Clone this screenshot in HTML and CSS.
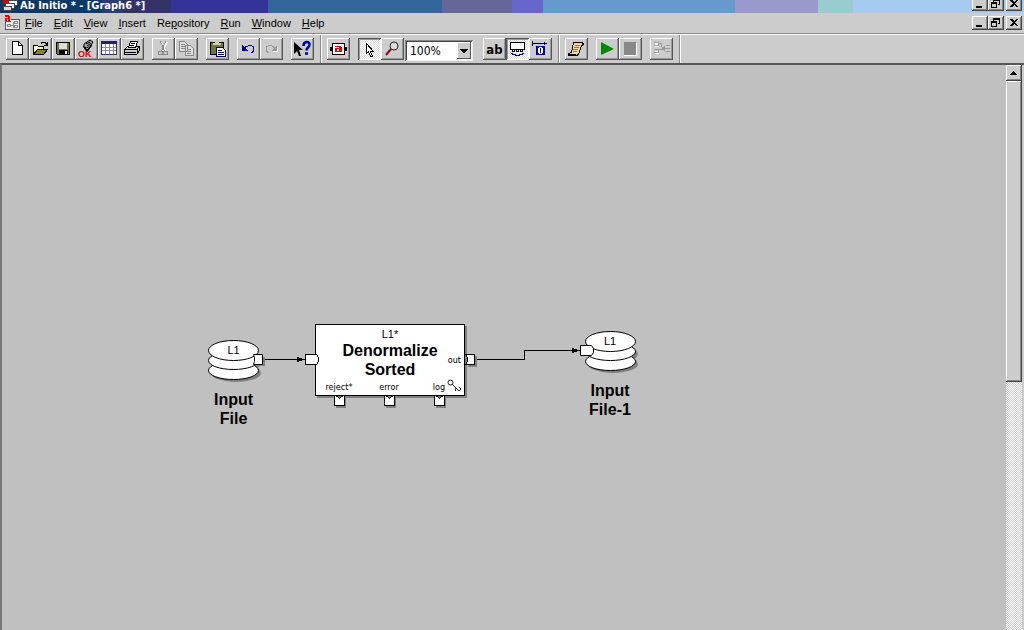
FILE: index.html
```html
<!DOCTYPE html>
<html lang="en">
<head>
    <meta charset="UTF-8">
    <meta name="viewport" content="width=device-width, initial-scale=1.0">
    <title>Ab Initio * - [Graph6 *]</title>
    <link rel="stylesheet" href="styles.css">
</head>
<body>
    <header class="title-bar">
        <svg class="app-icon" width="16" height="16" viewBox="0 0 16 16">
            <path d="M6.500 4.500h9v5h-9z" fill="#fff" stroke="#444"/>
            <path d="M3.500 7.500h9v5h-9z" fill="#fff" stroke="#444"/>
            <path d="M1.500 10.500h8v4h-8z" fill="#ddd" stroke="#444"/>
            <path d="M1 4h5v4H1z" fill="#d00"/>
        </svg>
        <h1>Ab Initio * - [Graph6 *]</h1>
        <div class="window-buttons">
            <button aria-label="Minimize"><svg width="16" height="14"><path d="M4 9h6v2H4z"/></svg></button>
            <button aria-label="Restore"><svg width="16" height="14"><path d="M5 2h7v6h-2v-1h1V4H6v1H5zM3 5h6v6H3zM4 7v3h4V7z" fill-rule="evenodd"/></svg></button>
            <button class="close" aria-label="Close"><svg width="16" height="14"><path d="M4 3h2l2 2 2-2h2L9 6.500 12 10h-2L8 8l-2 2H4l3-3.500z"/></svg></button>
        </div>
    </header>

    <nav class="menu-bar">
        <svg class="doc-icon" width="16" height="16" viewBox="0 0 16 16">
            <path d="M2 5h13v9H2z" fill="#eee"/>
            <path d="M1.500 6v8.500h14V4.500H7" fill="none" stroke="#555"/>
            <path d="M3.500 9.500h3v2h-3zM10.500 6.500h3v2h-3zM10.500 10.500h3v2h-3zM7 10.500h2v-3h1M9 10v2h1" fill="none" stroke="#888"/>
            <path d="M1 0h4v1h1v5h1v1H2V6H1V3h3V2H1zM3 4v2h1V4z" fill="#e00" fill-rule="evenodd"/>
        </svg>
        <button><u>F</u>ile</button>
        <button><u>E</u>dit</button>
        <button><u>V</u>iew</button>
        <button><u>I</u>nsert</button>
        <button>Re<u>p</u>ository</button>
        <button><u>R</u>un</button>
        <button><u>W</u>indow</button>
        <button><u>H</u>elp</button>
        <div class="window-buttons">
            <button aria-label="Minimize graph"><svg width="16" height="14"><path d="M4 9h6v2H4z"/></svg></button>
            <button aria-label="Restore graph"><svg width="16" height="14"><path d="M5 2h7v6h-2v-1h1V4H6v1H5zM3 5h6v6H3zM4 7v3h4V7z" fill-rule="evenodd"/></svg></button>
            <button class="close" aria-label="Close graph"><svg width="16" height="14"><path d="M4 3h2l2 2 2-2h2L9 6.500 12 10h-2L8 8l-2 2H4l3-3.500z"/></svg></button>
        </div>
    </nav>

    <div class="toolbars">
        <div class="toolbar">
            <div class="group">
                <button class="tool" aria-label="New"><svg width="23" height="22"><path d="M6.500 3.500h6l4 4v9h-10z" fill="#fff" stroke="#000"/><path d="M12.500 3.500v4h4" fill="none" stroke="#000"/></svg></button>
                <button class="tool" aria-label="Open"><svg width="23" height="22"><path d="M4.500 16V7.500h4l1 1h5v3" fill="#ffffb0" stroke="#000"/><path d="M4.500 16.500l4-5h10l-4 5z" fill="#88881a" stroke="#000"/><path d="M12 5.500l1-1h3l2 2M18.500 4v3.500H15" fill="none" stroke="#000"/></svg></button>
                <button class="tool" aria-label="Save"><svg width="23" height="22"><path d="M4.500 4.500h13v12h-12l-1-1z" fill="#77771a" stroke="#000"/><path d="M7 5h8v6H7z" fill="#ddd"/><path d="M7 12h9v4H7z" fill="#000"/><path d="M13 13h2v3h-2z" fill="#eee"/></svg></button>
                <button class="tool check" aria-label="Check"><svg class="smooth" width="23" height="22"><path d="M9 6l6-4 3 2-2 3-4 3-3-1z" fill="#aaa" stroke="#000"/><path d="M8 8l4 4 5-5-5 7z" fill="#000" stroke="#000"/><path d="M11 6l4-2M12 8l4-3" stroke="#000"/></svg><span>OK</span></button>
                <button class="tool" aria-label="Table"><svg width="23" height="22"><path d="M3.500 3.500h15v13h-15z" fill="#fff" stroke="#336"/><path d="M3 3h16v3H3z" fill="#226"/><path d="M4 9.500h14M4 12.500h14M7.500 6v10M11.500 6v10M15.500 6v10" stroke="#88a"/></svg></button>
                <button class="tool" aria-label="Print"><svg width="23" height="22"><path d="M3.500 11.500l3-3h12v4l-3 4h-12z" fill="#ccc" stroke="#000"/><path d="M7.500 9.500l2-6h7l-2 6z" fill="#fff" stroke="#000"/><path d="M10 5.500h4M9 7.500h4" stroke="#000"/><path d="M4 11.500h12l2-3M16 12v4M4 14.500h11" fill="none" stroke="#000"/><path d="M10 13h3v1h-3z" fill="#dd0"/></svg></button>
            </div>
            <div class="group">
                <button class="tool" aria-label="Cut" disabled><svg width="23" height="22"><path d="M9 4l5 10M15 4l-5 10" stroke="#fff" stroke-width="2"/><path d="M8.500 3.500l4 10M13.500 3.500l-4 10" stroke="#888"/><circle cx="8.500" cy="15" r="2" fill="none" stroke="#888"/><circle cx="13.500" cy="15" r="2" fill="none" stroke="#888"/></svg></button>
                <button class="tool" aria-label="Copy" disabled><svg width="23" height="22"><path d="M4.500 3.500h5l3 3v7h-8zM10.500 7.500h5l3 3v7h-8z" fill="#ddd" stroke="#888"/><path d="M6 6.500h4M6 8.500h4M6 10.500h4M12 11.500h4M12 13.500h4M12 15.500h4" stroke="#888"/></svg></button>
            </div>
            <div class="group">
                <button class="tool" aria-label="Paste"><svg width="23" height="22"><path d="M4.500 4.500h13v12h-13z" fill="#77772a" stroke="#000"/><path d="M7 5h8v2H7z" fill="#ccc"/><path d="M9 3h4v2H9z" fill="#dd5"/><path d="M10.500 9.500h6l3 3v6h-9z" fill="#fff" stroke="#006"/><path d="M12 12.500h4M12 14.500h6M12 16.500h6" stroke="#006"/></svg></button>
            </div>
            <div class="group">
                <button class="tool" aria-label="Undo"><svg width="23" height="22"><path d="M5 7v6h6z" fill="#009"/><path d="M7 11c2-4 10-5 10 0 0 2-1 3-3 4" fill="none" stroke="#009"/></svg></button>
                <button class="tool" aria-label="Redo" disabled><svg width="23" height="22"><path d="M18 8v6h-6z" fill="#fff"/><path d="M17 7v6h-6z" fill="#999"/><path d="M15 11C13 6 6 7 6 11c0 2 1 3 3 4" fill="none" stroke="#999"/></svg></button>
            </div>
            <div class="group">
                <button class="tool" aria-label="Context help"><svg class="smooth" width="23" height="22"><path d="M3 4v12l3-3 2 5h2l-2-6h4z" fill="#000"/><path d="M12.500 8c0-5 6-5 6-1.500 0 3-3 3-3 6M14 15.500h3" fill="none" stroke="#009" stroke-width="2.500"/></svg></button>
            </div>
        </div>
        <div class="toolbar">
            <div class="group">
                <button class="tool" aria-label="Component"><svg width="23" height="22"><path d="M5.500 5.500h12v11h-12z" fill="#fff" stroke="#000"/><path d="M3 9h3v4H3zM17 9h3v4h-3z" fill="#000"/><path d="M8 8h6v1h1v5H8v-4h4V9H8zM10 11v2h2v-2z" fill="#e00" fill-rule="evenodd"/></svg></button>
            </div>
            <div class="group">
                <button class="tool pressed" aria-label="Select"><svg width="23" height="22"><path d="M8.500 5.500v10l2-2 2 5h2l-2-5h3z" fill="#fff" stroke="#000"/></svg></button>
                <button class="tool" aria-label="Magnifier"><svg class="smooth" width="23" height="22"><circle cx="13" cy="8" r="4" fill="#ddd" stroke="#222"/><path d="M10 11l-5 6" stroke="#811" stroke-width="2"/></svg></button>
                <div class="zoom">
                    <select aria-label="Zoom"><option>100%</option></select>
                    <span><svg width="14" height="17"><path d="M3 7h8v1h-1v1H9v1H8v1H6v-1H5V9H4V8H3z"/></svg></span>
                </div>
            </div>
            <div class="group">
                <button class="tool label">ab</button>
                <button class="tool pressed" aria-label="Show ports"><svg width="23" height="22"><path d="M4.500 4.500h14v7h-14z" fill="#fff" stroke="#000"/><path d="M6 11h3v3H6zM10 11h3v3h-3zM14 11h3v3h-3z" fill="#000"/><path d="M7 12h1v1H7zM11 12h1v1h-1zM15 12h1v1h-1z" fill="#fff"/><path d="M5 15h2v1h3v1h3v-1h3v-1h2v1h-1v1h-3v1H9v-1H6v-1H5z" fill="#00a"/></svg></button>
                <button class="tool" aria-label="Show counts"><svg width="23" height="22"><path d="M3 3h1v5H3zM4 5h11V4h1v1h2v1h-2v1h-1V6H4z" fill="#000"/><path d="M7 8h9v9H7z" fill="#00b"/><path d="M10 9h3v1h1v5h-1v1h-3v-1H9v-5h1zM11 10v5h1v-5z" fill="#fff" fill-rule="evenodd"/></svg></button>
            </div>
        </div>
        <div class="toolbar">
            <div class="group">
                <button class="tool" aria-label="Script"><svg width="23" height="22"><path d="M8.500 4.500h9l1 2-2 1-3 9-2 1h-8v-2l3-1z" fill="#f3d59a" stroke="#000"/><path d="M10 7.500h5M9 9.500h5M8 11.500h5M8 13.500h4" stroke="#974"/><path d="M4 16.500h7" stroke="#000"/></svg></button>
            </div>
            <div class="group">
                <button class="tool" aria-label="Run"><svg class="smooth" width="23" height="22"><path d="M5 4l13 7-13 6z" fill="#008a00"/></svg></button>
                <button class="tool" aria-label="Stop" disabled><svg width="23" height="22"><path d="M5 5h13v13H5z" fill="#fff"/><path d="M5 4h12v13H5z" fill="#888"/></svg></button>
            </div>
            <div class="group">
                <button class="tool" aria-label="Watcher" disabled><svg width="23" height="22"><path d="M5 5h4v4H5zM5 13h4v3H5z" fill="#fff"/><path d="M4 4.500h4v3H4M4 11.500h4v3H4M8 5.500h3v3l2 1v2h-5M14 10.500h6M16 7.500h4M16 13.500h4" fill="none" stroke="#999"/><path d="M15 8l-3 2.500 3 2.500z" fill="#999"/></svg></button>
            </div>
        </div>
    </div>

    <main class="workspace">
        <div class="canvas">
            <svg class="flows" width="700" height="400">
                <path d="M261 294.500h34M472 294.500h50.500v-9H573" fill="none" stroke="#000"/>
                <path d="M295 292l8 2.500-8 2.500zM570 283l8 2.500-8 2.500z"/>
            </svg>

            <div class="file input">
                <svg width="62" height="46">
                    <g fill="#808080"><ellipse cx="30" cy="34" rx="25" ry="9"/><ellipse cx="30" cy="24" rx="25" ry="9"/><path d="M50 18h9v9H50z"/></g>
                    <g fill="#fff" stroke="#000">
                        <ellipse cx="27.500" cy="31.500" rx="25" ry="9"/>
                        <ellipse cx="27.500" cy="21.500" rx="25" ry="9"/>
                        <ellipse cx="27.500" cy="11.500" rx="25" ry="10"/>
                        <path d="M47.500 15.500h9v10h-9l1-3v-4z"/>
                    </g>
                </svg>
                <span class="layout">L1</span>
                <h2>Input<br>File</h2>
            </div>

            <div class="component">
                <span class="layout">L1*</span>
                <h2>Denormalize<br>Sorted</h2>
                <span class="out">out</span>
                <div class="ports">
                    <span>reject*</span>
                    <span>error</span>
                    <span>log</span>
                </div>
                <svg class="key" width="15" height="14"><circle cx="3.500" cy="3.500" r="2.500" fill="none" stroke="#222"/><path d="M5 5l7 7M9 9l-1 2 1 1M12 12l2-2-2-2" fill="none" stroke="#222"/></svg>
                <svg class="plugs" width="176" height="88">
                    <g fill="#808080"><path d="M163 32h9v11h-9zM31 74h10v10H31zM81 74h10v10H81zM131 74h10v10h-10z"/></g>
                    <g fill="#fff" stroke="#000">
                        <path d="M.500 30.500h11l2 3v4l-2 3H.500z"/>
                        <path d="M160.500 30.500h9v10h-9l2-3v-4z"/>
                        <path d="M29.500 71.500l3 1 2 2 2-2 3-1v10h-10zM79.500 71.500l3 1 2 2 2-2 3-1v10h-10zM129.500 71.500l3 1 2 2 2-2 3-1v10h-10z"/>
                    </g>
                </svg>
            </div>

            <div class="file output">
                <svg width="62" height="46">
                    <g fill="#808080"><ellipse cx="34" cy="34" rx="25" ry="9"/><ellipse cx="34" cy="24" rx="25" ry="9"/></g>
                    <g fill="#fff" stroke="#000">
                        <ellipse cx="31.500" cy="31.500" rx="25" ry="9"/>
                        <ellipse cx="31.500" cy="21.500" rx="25" ry="9"/>
                        <ellipse cx="31.500" cy="11.500" rx="25" ry="10"/>
                        <path d="M1.500 15.500h11l2 3v4l-2 3h-11z"/>
                    </g>
                </svg>
                <span class="layout">L1</span>
                <h2>Input<br>File-1</h2>
            </div>
        </div>
        <div class="scrollbar">
            <button class="scroll-up" aria-label="Scroll up"><svg width="15" height="14"><path d="M7 5h1v1h1v1h1v1h1v1H4V8h1V7h1V6h1z"/></svg></button>
            <div class="thumb"></div>
        </div>
    </main>
</body>
</html>
```

FILE: styles.css
```css
* {
    box-sizing: border-box;
}

body {
    margin: 0;
    height: 100vh;
    overflow: hidden;
    display: flex;
    flex-direction: column;
    background: #ccc;
    color: #000;
    font-family: "DejaVu Sans Condensed", "DejaVu Sans", sans-serif;
    font-size: 11px;
}

svg {
    display: block;
    shape-rendering: crispEdges;
}

.smooth, .file svg {
    shape-rendering: auto;
}

button {
    padding: 0;
    border: none;
    background: none;
    color: inherit;
    font: inherit;
}

/* title bar */
.title-bar {
    display: flex;
    align-items: center;
    height: 18px;
    margin-top: -5px;
    padding: 0 2px;
    flex: none;
    background: linear-gradient(90deg,
        #0c3868 10%, #2c3b75 10% 12%, #333366 12% 16.7%, #333399 16.7% 26.2%,
        #336699 26.2% 43.2%, #666699 43.2% 50%, #6666cc 50% 53%,
        #6699cc 53% 71.8%, #9999cc 71.8% 79.9%, #99cccc 79.9% 83.3%, #a6caf0 83.3%);
}

.title-bar h1 {
    margin: 0 0 0 2px;
    padding-top: 3px;
    color: #fff;
    font-size: 11px;
    line-height: 13px;
}

.window-buttons {
    display: flex;
    margin-left: auto;
}

.window-buttons button {
    width: 16px;
    height: 14px;
    background: #ccc;
    box-shadow: inset -1px -1px #444, inset 1px 1px #fff, inset -2px -2px #888;
}

.window-buttons .close {
    margin-left: 2px;
}

/* menu */
.menu-bar {
    display: flex;
    align-items: center;
    gap: 11px;
    height: 21px;
    padding: 0 2px 0 4px;
    flex: none;
    border-bottom: 1px solid #888;
    font-family: "Liberation Sans", Arial, sans-serif;
}

.doc-icon {
    margin-right: -6px;
}

/* toolbars */
.toolbars {
    display: flex;
    height: 29px;
    flex: none;
    border-top: 1px solid #fff;
}

.toolbar {
    display: flex;
    gap: 8px;
    padding: 3px 6px 0;
    border-right: 1px solid #888;
    box-shadow: 1px 0 #fff;
}

.group {
    display: flex;
}

.tool {
    width: 23px;
    height: 22px;
    background: #ccc;
    box-shadow: inset -1px -1px #555, inset 1px 1px #fff, inset -2px -2px #999;
}

.pressed {
    background: repeating-conic-gradient(#fff 0 25%, #ddd 0 50%) 0 0 / 2px 2px;
    box-shadow: inset 1px 1px #555, inset -1px -1px #fff, inset 2px 2px #999;
}

.label {
    font-size: 13px;
    font-weight: bold;
}

.check {
    display: grid;
}

.check svg, .check span {
    grid-area: 1 / 1;
}

.check span {
    align-self: end;
    padding-left: 3px;
    color: #d00;
    text-align: left;
    font: bold 9px/11px "Liberation Sans", Arial, sans-serif;
}

.zoom {
    display: grid;
    width: 68px;
    height: 21px;
    margin: 2px 2px 0 1px;
    padding: 2px;
    background: #fff;
    box-shadow: inset 1px 1px #888, inset -1px -1px #eee, inset 2px 2px #444;
}

.zoom select, .zoom span {
    grid-area: 1 / 1;
}

.zoom select {
    width: 100%;
    padding: 0 0 0 3px;
    border: none;
    background: none;
    appearance: none;
    color: #000;
    font-family: "DejaVu Sans Condensed", "DejaVu Sans", sans-serif;
    font-size: 12px;
}

.zoom span {
    justify-self: end;
    pointer-events: none;
    background: #ccc;
    box-shadow: inset -1px -1px #555, inset 1px 1px #fff;
}

/* graph */
.workspace {
    display: flex;
    flex: 1;
    min-height: 0;
    padding-right: 2px;
    border-top: 2px solid #555;
    border-left: 2px solid #777;
}

.canvas {
    position: relative;
    flex: 1;
    overflow: hidden;
    background: #c0c0c0;
}

.flows {
    position: absolute;
    left: 0;
    top: 0;
}

.file {
    position: absolute;
    width: 62px;
    text-align: center;
}

.input {
    left: 204px;
    top: 274px;
}

.output {
    left: 577px;
    top: 265px;
}

.file h2, .component h2 {
    margin: 0;
    font: bold 16px/19px "Liberation Sans", Arial, sans-serif;
}

.input h2 {
    width: 55px;
}

.layout {
    font: 11px/13px "Liberation Sans", Arial, sans-serif;
}

.file .layout {
    position: absolute;
    left: 0;
    top: 5px;
    width: 55px;
}

.output .layout {
    width: 62px;
}

.file h2 {
    margin-top: 5px;
}

.component {
    position: absolute;
    left: 313px;
    top: 259px;
    width: 150px;
    height: 72px;
    padding-top: 3px;
    border: 1px solid #000;
    background: #fff;
    box-shadow: 2px 2px #808080;
    text-align: center;
}

.component .layout {
    display: block;
}

.out, .ports {
    font: 9px/12px "DejaVu Sans Condensed", "DejaVu Sans", sans-serif;
}

.out {
    position: absolute;
    right: 3px;
    top: 29px;
}

.ports {
    position: absolute;
    left: -2px;
    bottom: 2px;
    display: flex;
}

.ports span {
    width: 50px;
}

.key {
    position: absolute;
    right: 2px;
    bottom: 2px;
    shape-rendering: auto;
}

.plugs {
    position: absolute;
    left: -11px;
    top: -1px;
}

/* scrollbar */
.scrollbar {
    width: 16px;
    background: repeating-conic-gradient(#fff 0 25%, #ccc 0 50%) 0 0 / 2px 2px;
}

.scroll-up, .thumb {
    display: block;
    width: 16px;
    background: #ccc;
    box-shadow: inset -1px -1px #444, inset 1px 1px #fff, inset -2px -2px #888;
}

.scroll-up {
    height: 16px;
}

.thumb {
    height: 55%;
    max-height: 301px;
}
```
